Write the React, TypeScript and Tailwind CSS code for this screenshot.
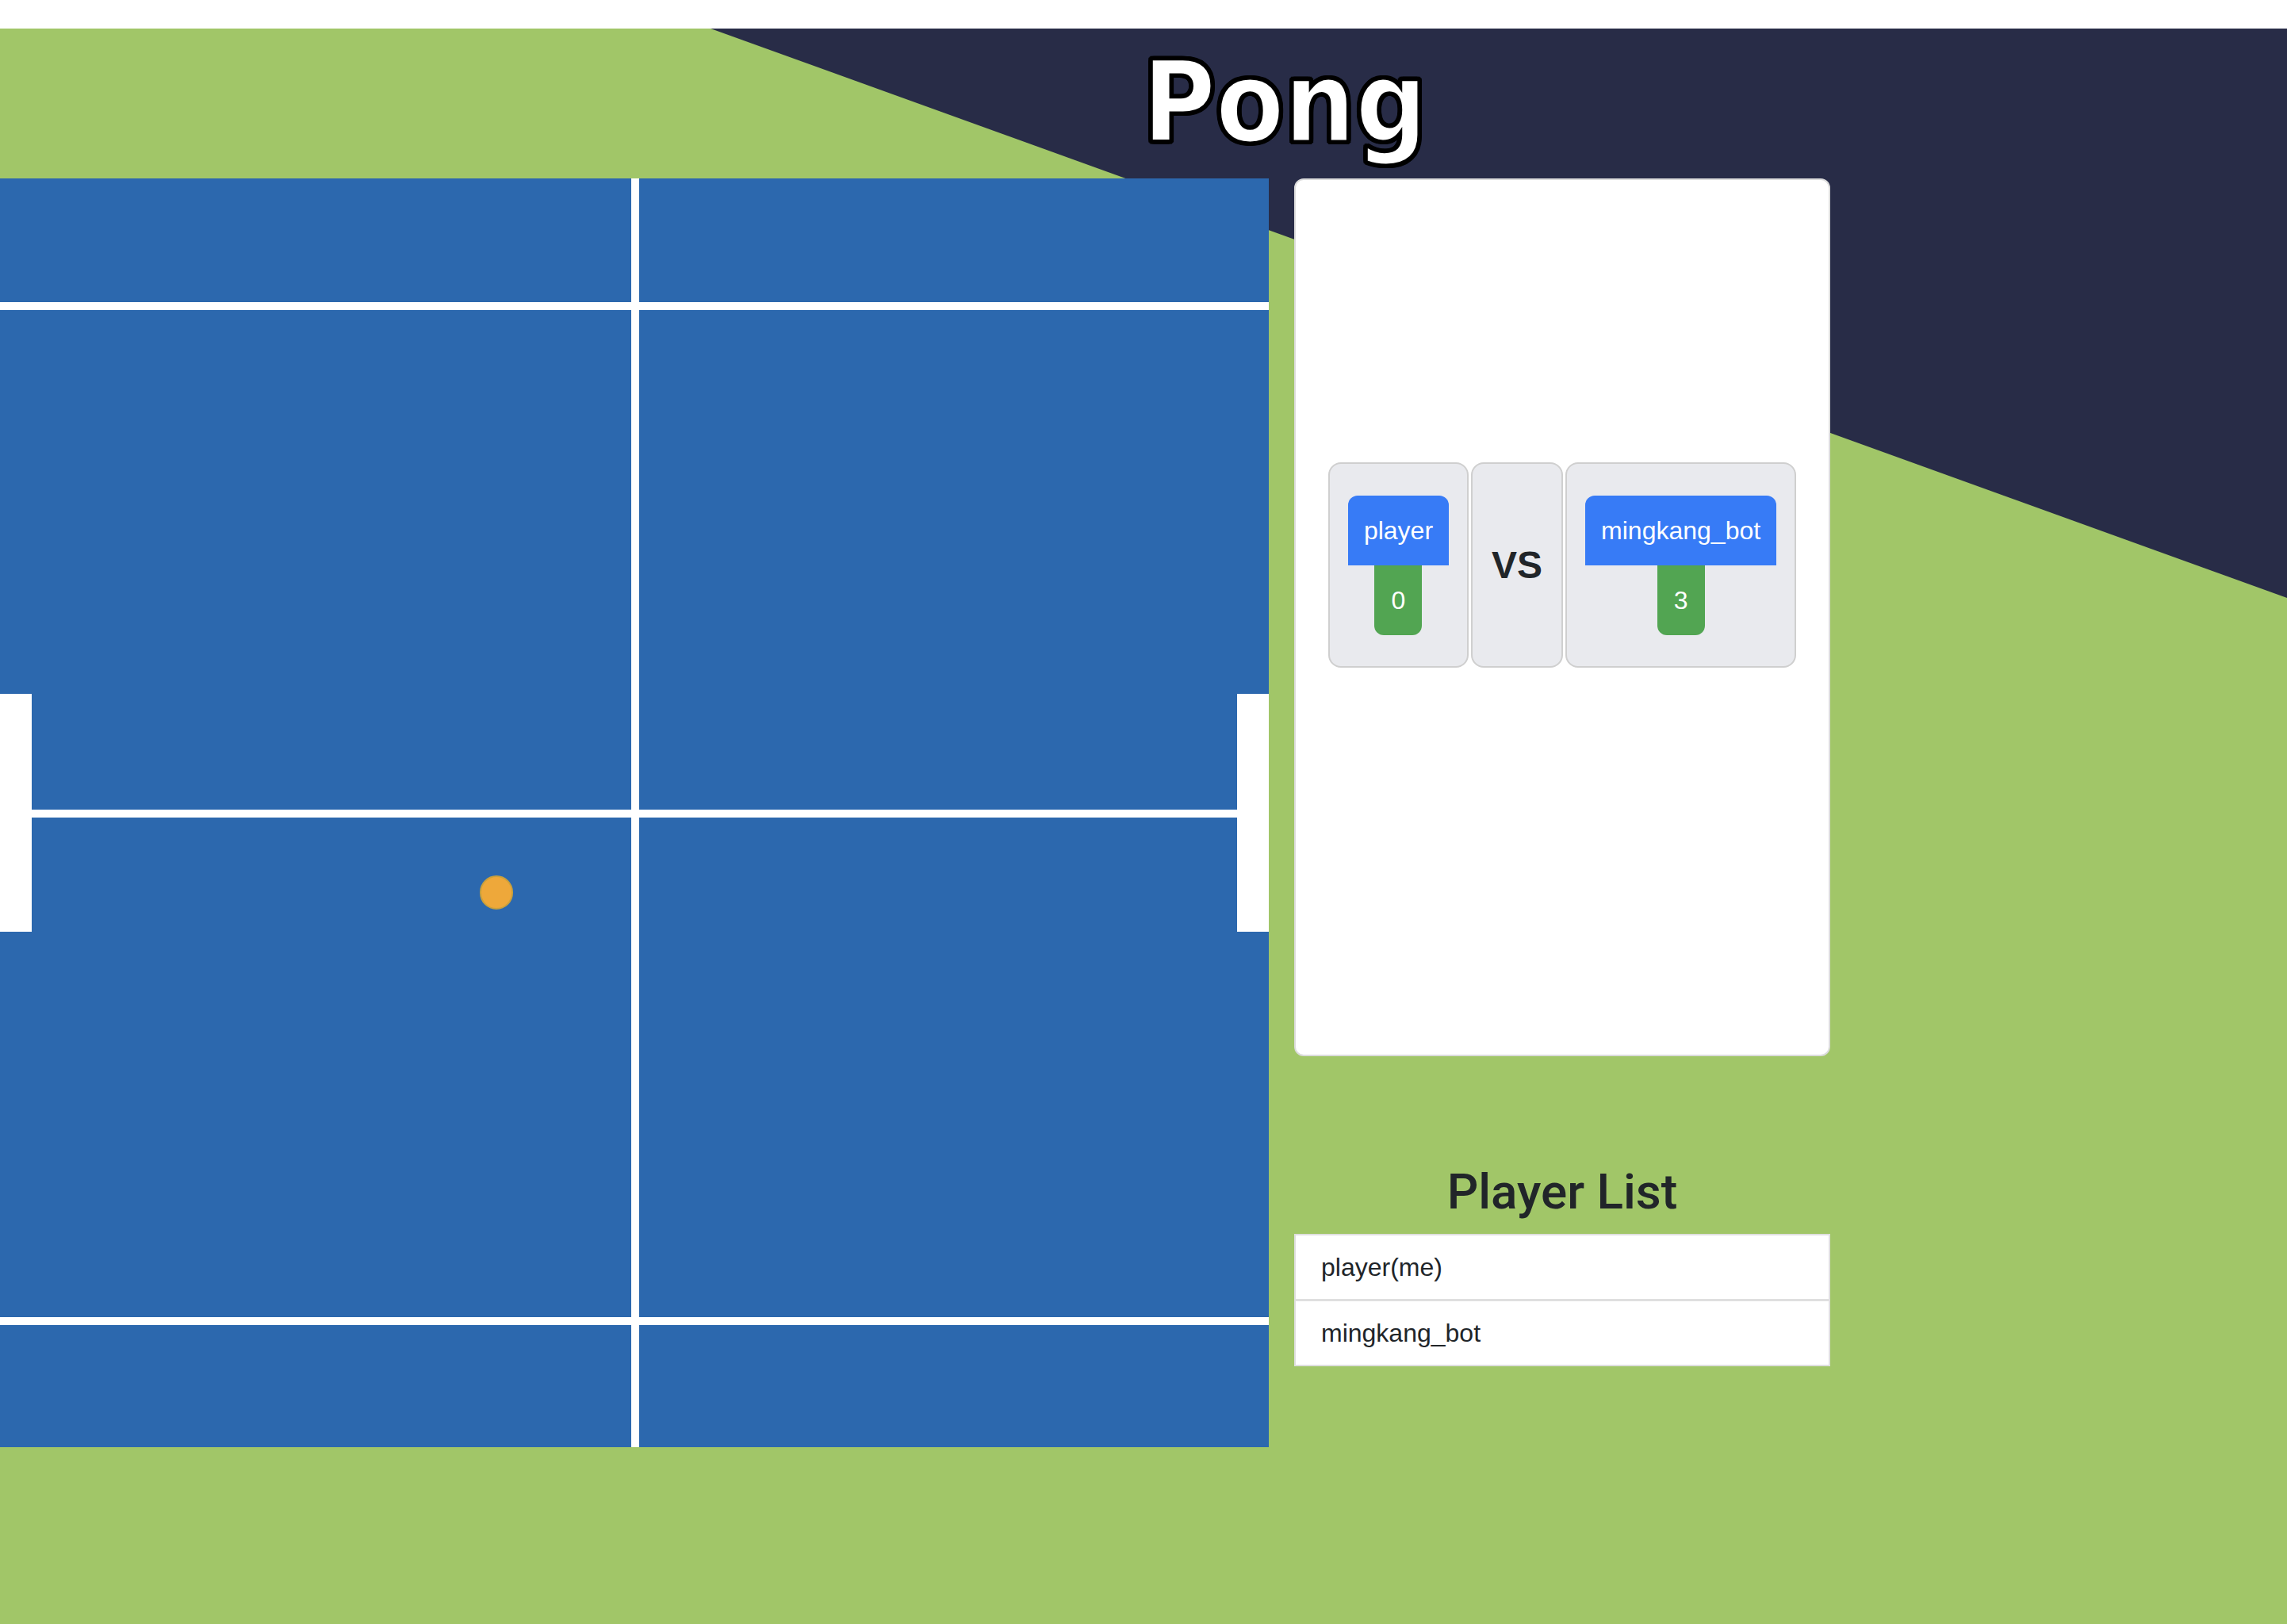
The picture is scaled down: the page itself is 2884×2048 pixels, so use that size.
import React from 'react';

type Player = {
  name: string;
  score: number;
  me?: boolean;
};

const players: Player[] = [
  { name: 'player', score: 0, me: true },
  { name: 'mingkang_bot', score: 3 },
];

// the pong table, drawn like the canvas in the game
function Court() {
  return (
    <div className="relative h-[1600px] w-[1600px] shrink-0 bg-[#2c68ae]">
      <div className="absolute left-0 right-0 top-[156px] h-[10px] bg-white" />
      <div className="absolute left-0 right-0 top-[796px] h-[10px] bg-white" />
      <div className="absolute left-0 right-0 top-[1436px] h-[10px] bg-white" />
      <div className="absolute bottom-0 top-0 left-[796px] w-[10px] bg-white" />
      <div className="absolute left-0 top-[650px] h-[300px] w-[40px] bg-white" />
      <div className="absolute right-0 top-[650px] h-[300px] w-[40px] bg-white" />
      <div className="absolute left-[605px] top-[879px] h-[43px] w-[42px] rounded-full border-2 border-[#c9a03c] bg-[#eea83a]" />
    </div>
  );
}

function PlayerBox({ player }: { player: Player }) {
  return (
    <div className="flex h-[259px] flex-col items-center justify-center rounded-[16px] border-2 border-[#cfcfcf] bg-[#e9eaee] px-[23px]">
      <div className="rounded-t-[12px] bg-[#377bf6] px-[20px] py-[20px] text-[32px] leading-[48px] text-white">
        {player.name}
      </div>
      <div className="w-[60px] rounded-b-[12px] bg-[#52a552] py-[20px] text-center text-[32px] leading-[48px] text-white">
        {player.score}
      </div>
    </div>
  );
}

function ScoreBoard() {
  const [left, right] = players;
  return (
    <div className="h-[1107px] rounded-[12px] border-2 border-[#dcdcdc] bg-white pt-[356px]">
      <div className="flex justify-center gap-[3px]">
        <PlayerBox player={left} />
        <div className="flex h-[259px] items-center rounded-[16px] border-2 border-[#cfcfcf] bg-[#e9eaee] px-[24px] text-[48px] font-bold text-[#212529]">
          VS
        </div>
        <PlayerBox player={right} />
      </div>
    </div>
  );
}

function PlayerList() {
  return (
    <div className="mt-[134px]">
      <h2 className="mb-[16px] text-center font-['Roboto',sans-serif] text-[62px] font-medium leading-[1.2] text-[#212529]">
        Player List
      </h2>
      <ul className="border-2 border-[#dfdfdf] bg-white">
        {players.map((p, i) => (
          <li
            key={p.name}
            className={
              'px-[32px] py-[16px] text-[32px] leading-[48px] text-[#212529] ' +
              (i > 0 ? 'border-t-[3px] border-[#dfdfdf]' : '')
            }
          >
            {p.name}
            {p.me ? '(me)' : ''}
          </li>
        ))}
      </ul>
    </div>
  );
}

export default function App() {
  return (
    <div className="min-h-[2048px] bg-white pt-[36px] font-['Liberation_Sans',Arial,sans-serif]">
      <div className="relative min-h-[2012px] overflow-hidden bg-[#a1c668]">
        <div className="absolute inset-0 bg-[#282c47] [clip-path:polygon(31.07%_0,100%_0,100%_718px)]" />
        <header className="relative flex h-[189px] justify-center pl-[356px] pt-[24px]">
          <h1 className="font-['DejaVu_Sans_Condensed','DejaVu_Sans',sans-serif] text-[140px] font-bold leading-none text-white [font-stretch:condensed] [-webkit-text-stroke:3px_#000] [text-shadow:4px_0_0_#000,-4px_0_0_#000,0_4px_0_#000,0_-4px_0_#000,3px_3px_0_#000,-3px_3px_0_#000,3px_-3px_0_#000,-3px_-3px_0_#000,2px_4px_0_#000,-2px_4px_0_#000,4px_2px_0_#000,-4px_2px_0_#000,2px_-4px_0_#000,-2px_-4px_0_#000,4px_-2px_0_#000,-4px_-2px_0_#000]">
            Pong
          </h1>
        </header>
        <main className="relative flex items-start gap-[32px]">
          <Court />
          <div className="flex w-[676px] flex-col">
            <ScoreBoard />
            <PlayerList />
          </div>
        </main>
      </div>
    </div>
  );
}
